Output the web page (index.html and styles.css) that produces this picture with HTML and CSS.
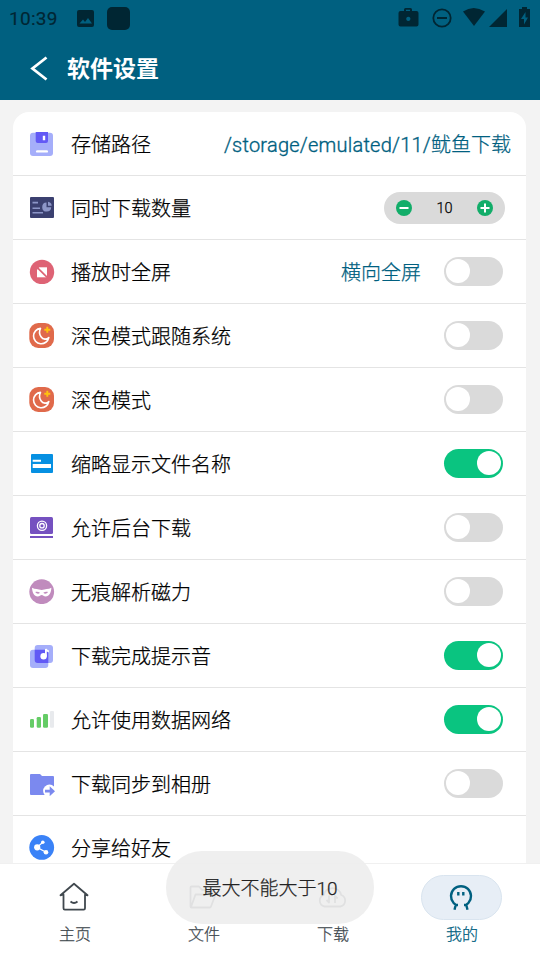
FILE: index.html
```html
<!DOCTYPE html>
<html lang="zh-CN">
<head>
<meta charset="utf-8">
<title>软件设置</title>
<link rel="stylesheet" href="styles.css">
</head>
<body>
<div class="screen">
  <header class="header">
    <div class="status">
      <span class="clock">10:39</span>
      <svg class="status-left" width="54" height="24" viewBox="0 0 54 24">
        <path fill-rule="evenodd" d="M3 4h13a2 2 0 0 1 2 2v13a2 2 0 0 1-2 2H3a2 2 0 0 1-2-2V6a2 2 0 0 1 2-2zM3.500 17.500h12.500l-4-5.500-3 4-2-2.500z"/>
        <rect x="31" y="1" width="23" height="23" rx="5"/>
      </svg>
      <svg class="status-right" width="134" height="24" viewBox="0 0 134 24">
        <path fill-rule="evenodd" d="M6 5V3.500Q6 2 7.500 2h5Q14 2 14 3.500V5h4.500a2 2 0 0 1 2 2v11.500a2 2 0 0 1-2 2h-16a2 2 0 0 1-2-2V7a2 2 0 0 1 2-2zM8 5h4V3.800H8zM10.300 10.800a2.100 2.100 0 1 0 .01 0z"/>
        <circle class="ring" cx="44" cy="12" r="8.700"/>
        <path d="M39 11h10v2H39z"/>
        <path d="M65 5.500Q75.500-1.500 87 5.500L76 20z"/>
        <path d="M91 21 109 3v18z"/>
        <path fill-rule="evenodd" d="M121 3h3V1h5v2h3v18h-11zM127.500 6l-4.500 7h3v5.500l4-7h-2.500z"/>
      </svg>
    </div>
    <div class="titlebar">
      <svg width="20" height="26" viewBox="0 0 20 26"><path class="back" d="M17.500 1.500 3.500 12.500 17.500 23.500"/></svg>
      <h1 class="title">软件设置</h1>
    </div>
  </header>

  <main class="content">
    <div class="card">
      <div class="row">
        <svg class="icon" viewBox="0 0 28 25"><rect x="2" y="1.700" width="23" height="23.300" rx="3" fill="#a5aefa"/><path d="M7.700 1H20v9a2 2 0 0 1-2 2H9.700a2 2 0 0 1-2-2z" fill="#6259f5"/><path d="M14.800 4.700h2.400v4.600h-2.400z" fill="#fff"/><rect x="8" y="19.200" width="12" height="2.400" rx="1.200" fill="#fff"/></svg>
        <span class="label">存储路径</span>
        <span class="value path"><span class="folder">/storage/emulated/11/</span>鱿鱼下载</span>
      </div>
      <div class="row">
        <svg class="icon" viewBox="0 0 28 25"><rect x="2" y="2" width="24" height="21" rx="1" fill="#3b4070"/><path d="M4.500 7.600H10M4.500 13.300H12M4.500 17.700H15" stroke="#8d96c8" stroke-width="1.600"/><path d="M18.500 7.600v4.700h4.700a4.500 4.500 0 1 1-4.700-4.700z" fill="#8d96c8"/><path d="M20 6.800a4.300 4.300 0 0 1 3.700 3.900H20z" fill="#8d96c8"/></svg>
        <span class="label">同时下载数量</span>
        <div class="stepper">
          <svg width="16" height="16" viewBox="0 0 16 16"><circle cx="8" cy="8" r="8" fill="#12ad69"/><path class="sign" d="M3.500 8h9"/></svg>
          <span class="count">10</span>
          <svg width="16" height="16" viewBox="0 0 16 16"><circle cx="8" cy="8" r="8" fill="#12ad69"/><path class="sign" d="M3.500 8h9M8 3.500v9"/></svg>
        </div>
      </div>
      <div class="row">
        <svg class="icon" viewBox="0 0 28 25"><circle cx="14" cy="13" r="12.200" fill="#de6375"/><path d="M9 8.300h10v10H9z" fill="#fff"/><path d="M8.600 7.900 19.400 18.700" stroke="#de6375" stroke-width="1.700"/><path d="M8 7h4l-3 4H8z" fill="#de6375"/></svg>
        <span class="label">播放时全屏</span>
        <span class="value">横向全屏</span>
        <span class="toggle"></span>
      </div>
      <div class="row">
        <svg class="icon" viewBox="0 0 28 25"><rect x="1.300" y="0" width="24.700" height="25" rx="9" fill="#e06a4b"/><path class="moon" d="M12.500 5.400a7.700 7.700 0 1 0 8.300 9.200c-2 2.300-5.900 2.100-7.800-.8-1.700-2.600-1.900-5.700-.5-8.400z"/><path d="M19.300 3.700v6M16.300 6.700h6" stroke="#ffc20e" stroke-width="1.900"/></svg>
        <span class="label">深色模式跟随系统</span>
        <span class="toggle"></span>
      </div>
      <div class="row">
        <svg class="icon" viewBox="0 0 28 25"><rect x="1.300" y="0" width="24.700" height="25" rx="9" fill="#e06a4b"/><path class="moon" d="M12.500 5.400a7.700 7.700 0 1 0 8.300 9.200c-2 2.300-5.900 2.100-7.800-.8-1.700-2.600-1.900-5.700-.5-8.400z"/><path d="M19.300 3.700v6M16.300 6.700h6" stroke="#ffc20e" stroke-width="1.900"/></svg>
        <span class="label">深色模式</span>
        <span class="toggle"></span>
      </div>
      <div class="row">
        <svg class="icon" viewBox="0 0 28 25"><rect x="3" y="3" width="22" height="19" rx="1" fill="#0690e2"/><path d="M4.700 8.700H13v2H4.700zM4.700 13H23v4H4.700z" fill="#fff"/></svg>
        <span class="label">缩略显示文件名称</span>
        <span class="toggle on"></span>
      </div>
      <div class="row">
        <svg class="icon" viewBox="0 0 28 25"><rect x="2" y="2" width="23" height="17" rx="1.500" fill="#7551c0"/><path d="M2 21h23v2H2z" fill="#7551c0"/><circle cx="14" cy="10.700" r="4.600" fill="none" stroke="#fff" stroke-width="1.300"/><circle cx="14" cy="10.700" r="2.200" fill="none" stroke="#fff" stroke-width="1.300"/></svg>
        <span class="label">允许后台下载</span>
        <span class="toggle"></span>
      </div>
      <div class="row">
        <svg class="icon" viewBox="0 0 28 25"><circle cx="13.700" cy="12.700" r="12.400" fill="#c08bbd"/><path fill="#fff" fill-rule="evenodd" d="M4 8.700c3 1.600 6 1.200 9.700 2.300 3.600-1.100 6.600-.7 9.700-2.300-.3 4.800-2.200 8.800-5.700 8.800-2 0-2.700-1.500-4-1.500s-2 1.500-4 1.500c-3.500 0-5.400-4-5.700-8.800zM7.300 13c1.300 2 3.300 2.100 4.700.8-1.400-1-3-1.200-4.700-.8zM20 13c-1.300 2-3.300 2.100-4.700.8 1.400-1 3-1.200 4.700-.8z"/></svg>
        <span class="label">无痕解析磁力</span>
        <span class="toggle"></span>
      </div>
      <div class="row">
        <svg class="icon" viewBox="0 0 28 25"><rect x="6.700" y="2" width="18.300" height="18" rx="3" fill="#a5aefa"/><rect x="2" y="6.700" width="18.300" height="18.300" rx="3" fill="#a5aefa"/><path d="M6.700 6.700h11.600a2 2 0 0 1 2 2V20H9.700a3 3 0 0 1-3-3z" fill="#6259f5"/><circle cx="15.600" cy="13.200" r="3.200" fill="#fff"/><path d="M17.900 13.500V6q.8 2 3 2.500" fill="none" stroke="#fff" stroke-width="1.800"/></svg>
        <span class="label">下载完成提示音</span>
        <span class="toggle on"></span>
      </div>
      <div class="row">
        <svg class="icon" viewBox="0 0 28 25"><g fill="#65cc66"><rect x="2" y="12" width="4" height="8.700" rx="1.300"/><rect x="8.700" y="10" width="4.300" height="10.700" rx="1.300"/><rect x="15" y="7" width="5" height="13.700" rx="1.300"/></g><rect x="22" y="4" width="4" height="16.700" rx="1" fill="#e8eaed"/></svg>
        <span class="label">允许使用数据网络</span>
        <span class="toggle on"></span>
      </div>
      <div class="row">
        <svg class="icon" viewBox="0 0 28 25"><path d="M2 4a1 1 0 0 1 1-1h9l2 2h11a1 1 0 0 1 1 1v17a1 1 0 0 1-1 1H3a1 1 0 0 1-1-1z" fill="#7b89ef"/><circle cx="21.500" cy="20" r="6.400" fill="#fff"/><path d="M17 18.800h4.700v-3.500l5.300 5-5.300 4.900v-3.600H17z" fill="#7b89ef"/></svg>
        <span class="label">下载同步到相册</span>
        <span class="toggle"></span>
      </div>
      <div class="row">
        <svg class="icon" viewBox="0 0 28 25"><circle cx="13.700" cy="12.400" r="12.400" fill="#3a82f7"/><path d="M14.800 7.300 9 12.300l9 5" fill="none" stroke="#fff" stroke-width="1.200"/><g fill="#fff"><circle cx="14.800" cy="7.200" r="1.800"/><circle cx="9.200" cy="12.300" r="3.100"/><circle cx="18" cy="17.200" r="2.300"/></g></svg>
        <span class="label">分享给好友</span>
      </div>
    </div>
  </main>

  <nav class="nav">
    <div class="tab">
      <span class="pill"><svg class="tab-icon" viewBox="0 0 31 31"><path d="M4.500 12.500 1.500 13.300 15 1.800l13.500 11.500-2.500-.6v13.600a1.300 1.300 0 0 1-1.300 1.300H5.800a1.300 1.300 0 0 1-1.300-1.300zM11.500 19.500q3.500 3 7 0"/></svg></span>
      <span class="tab-name">主页</span>
    </div>
    <div class="tab">
      <span class="pill"><svg class="tab-icon" viewBox="0 0 31 31"><path d="M3.500 25.500a1 1 0 0 1-1-1v-19a1 1 0 0 1 1-1h7.500l3 3.500h9a1 1 0 0 1 1 1v3.500M3 25l4.500-12.500h20L23 24.500a1.500 1.500 0 0 1-1.300 1H3.500"/></svg></span>
      <span class="tab-name">文件</span>
    </div>
    <div class="tab">
      <span class="pill"><svg class="tab-icon" viewBox="0 0 31 31"><path d="M7.500 24.500a6 6 0 0 1-.8-11.500 9 9 0 0 1 17.500 0 6 6 0 0 1-.8 11.500zM12 13.500v7l-2.500-2.500M18 21v-7l2.700 2.500"/></svg></span>
      <span class="tab-name">下载</span>
    </div>
    <div class="tab active">
      <span class="pill"><svg class="tab-icon" viewBox="0 0 31 31"><path d="M8.500 27.800 9.800 22.800 7.500 20.800A10 10 0 1 1 22.500 20.800L20.200 22.800 21.500 27.800M9.500 23h2.500M18 23h2.500M12.300 10v3.500M17.300 10v3.500"/></svg></span>
      <span class="tab-name">我的</span>
    </div>
  </nav>

  <div class="toast">最大不能大于10</div>
</div>
</body>
</html>
```
FILE: styles.css
```css
* {
  box-sizing: border-box;
}

body {
  margin: 0;
  font-family: Roboto, "Noto Sans CJK SC", sans-serif;
}

svg {
  display: block;
  flex: none;
}

.screen {
  position: relative;
  display: flex;
  flex-direction: column;
  width: 540px;
  height: 960px;
  overflow: hidden;
  background: #f3f3f3;
}

.header {
  flex: none;
  height: 100px;
  background: #006080;
}

.status {
  display: flex;
  align-items: flex-start;
  height: 37px;
  padding: 6px 8px 0 9px;
  fill: #002633;
  color: #002633;
}

.clock {
  width: 67px;
  padding-top: 1px;
  font-size: 19px;
  font-weight: 400;
  letter-spacing: 0.3px;
  line-height: 24px;
  -webkit-text-stroke: 0.15px currentColor;
}

.status-right {
  margin-left: auto;
}

.ring {
  fill: none;
  stroke: #002633;
  stroke-width: 1.8;
}

.titlebar {
  display: flex;
  align-items: center;
  gap: 18px;
  height: 63px;
  padding-left: 29px;
}

.back {
  fill: none;
  stroke: #fff;
  stroke-width: 2.8;
}

.title {
  margin: 0;
  padding-top: 2px;
  color: #fff;
  font-size: 23px;
  font-weight: 700;
  line-height: 32px;
}

.content {
  flex: 1;
  min-height: 0;
  overflow: hidden;
  padding: 12px 14px 0 13px;
}

.card {
  overflow: hidden;
  border-radius: 16px;
  background: #fff;
}

.row {
  display: flex;
  align-items: center;
  height: 64px;
  padding: 0 23px 0 15px;
  border-bottom: 1px solid #e4e4e4;
}

.icon {
  width: 28px;
  height: 25px;
  margin-right: 15px;
}

.label,
.value,
.tab-name,
.toast {
  font-weight: 300;
  -webkit-text-stroke: 0.25px currentColor;
}

.label {
  flex: 1;
  padding-top: 2px;
  color: #000;
  font-size: 20px;
  line-height: 28px;
  white-space: nowrap;
}

.value {
  padding-top: 2px;
  color: #006080;
  font-size: 20px;
  line-height: 28px;
  white-space: nowrap;
}

.path {
  margin-right: -8px;
}

.folder {
  letter-spacing: 0.23px;
  -webkit-text-stroke-width: 0.35px;
}

.toggle {
  display: flex;
  flex: none;
  align-items: center;
  width: 59px;
  height: 29px;
  margin-left: 23px;
  padding: 0 2px 1px;
  border-radius: 15px;
  background: #dadada;
}

.toggle::before {
  width: 24px;
  height: 24px;
  border-radius: 50%;
  background: #fff;
  content: "";
}

.toggle.on {
  justify-content: flex-end;
  background: #0ac480;
}

.stepper {
  display: flex;
  align-items: center;
  justify-content: space-between;
  width: 121px;
  height: 32px;
  margin: 1px -2px 0 0;
  padding: 0 12px;
  border-radius: 16px;
  background: #dadada;
}

.sign {
  stroke: #fff;
  stroke-width: 2;
}

.count {
  font-size: 14.5px;
  font-weight: 300;
  -webkit-text-stroke: 0.25px currentColor;
}

.moon {
  fill: none;
  stroke: #fff;
  stroke-width: 1.6;
  stroke-linejoin: round;
}

.nav {
  display: flex;
  flex: none;
  height: 97px;
  padding: 0 14px 0 10px;
  border-top: 1px solid #f0f0f0;
  background: #fff;
}

.tab {
  display: flex;
  flex: 1;
  flex-direction: column;
  align-items: center;
  padding-top: 11px;
  color: #40484e;
}

.pill {
  display: flex;
  align-items: center;
  justify-content: center;
  width: 81px;
  height: 45px;
  border: 1px solid transparent;
  border-radius: 23px;
}

.tab-icon {
  width: 31px;
  height: 31px;
  fill: none;
  stroke: currentColor;
  stroke-width: 1.8;
  stroke-linejoin: round;
}

.tab-name {
  margin-top: 3px;
  padding-left: 1px;
  font-size: 16px;
  line-height: 24px;
}

.active {
  color: #006080;
}

.active .pill {
  border-color: #d9e4ef;
  background: #e7eef6;
}

.active .tab-icon {
  stroke-width: 2.4;
}

.toast {
  position: absolute;
  top: 851px;
  left: 166px;
  width: 208px;
  height: 73px;
  padding-top: 1px;
  border-radius: 36px;
  background: rgba(238, 238, 238, 0.92);
  color: #222;
  font-size: 19px;
  line-height: 73px;
  text-align: center;
}
```
